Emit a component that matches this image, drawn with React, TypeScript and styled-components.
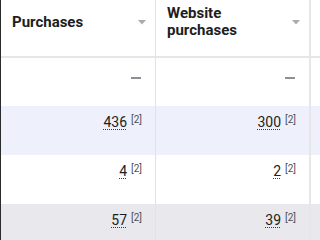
import styled, { createGlobalStyle } from "styled-components";

const GlobalStyle = createGlobalStyle`
  html, body {
    margin: 0;
    padding: 0;
    background: #ffffff;
  }
  body {
    font-family: Roboto, "Liberation Sans", Arial, sans-serif;
    color: #1c1e21;
    -webkit-font-smoothing: antialiased;
  }
`;

const Table = styled.div`
  width: 320px;
  height: 240px;
  overflow: hidden;
  border-left: 1px solid #2b2b2b;
  box-sizing: border-box;
`;

const Row = styled.div<{ $tone?: "white" | "blue" | "grey"; $height: number }>`
  display: grid;
  grid-template-columns: 155px 155px 1fr;
  height: ${(p) => p.$height}px;
  background: ${(p) =>
    p.$tone === "blue" ? "#eef0fb" : p.$tone === "grey" ? "#e9e8ec" : "#ffffff"};
`;

const HeaderRow = styled(Row)`
  border-bottom: 2px solid #e6e6e8;
`;

const Cell = styled.div<{ $wide?: boolean }>`
  box-sizing: border-box;
  border-right: ${(p) => (p.$wide ? "2px solid #e7e7ea" : "1px solid #e2e2e5")};
  display: flex;
  justify-content: flex-end;
  align-items: flex-start;
  padding: 7px 13px 0 0;
`;

const Filler = styled.div``;

const HeaderCell = styled(Cell)`
  justify-content: space-between;
  align-items: center;
  padding: 0 9px 12px 11px;
`;

const Title = styled.div`
  font-size: 15px;
  font-weight: 700;
  line-height: 17px;
  color: #1c1e21;
`;

const Caret = styled.svg`
  flex: none;
  width: 8px;
  height: 5px;
  margin-top: 1px;
`;

const Value = styled.span`
  font-size: 14px;
  line-height: 18px;
  color: #1c1e21;
  text-decoration: underline dotted #3a3d42;
  text-decoration-thickness: 1px;
  text-underline-offset: 2px;
`;

const Note = styled.span`
  font-size: 10px;
  line-height: 10px;
  color: #4b4f56;
  margin: 2px 0 0 4px;
`;

const Empty = styled.span`
  display: block;
  width: 10px;
  height: 2px;
  margin: 12px 1px 0 0;
  background: #8d9096;
`;

const DownCaret = () => (
  <Caret viewBox="0 0 8 5">
    <path d="M0 0h8L4 4.5z" fill="#a8abaf" />
  </Caret>
);

interface IMetric {
  value: string;
  note: string;
}

const rows: { tone: "white" | "blue" | "grey"; height: number; cells: (IMetric | null)[] }[] = [
  { tone: "white", height: 48, cells: [null, null] },
  { tone: "blue", height: 49, cells: [{ value: "436", note: "[2]" }, { value: "300", note: "[2]" }] },
  { tone: "white", height: 49, cells: [{ value: "4", note: "[2]" }, { value: "2", note: "[2]" }] },
  { tone: "grey", height: 49, cells: [{ value: "57", note: "[2]" }, { value: "39", note: "[2]" }] },
];

const MetricCell = ({ metric, wide }: { metric: IMetric | null; wide?: boolean }) => (
  <Cell $wide={wide}>
    {metric ? (
      <>
        <Value>{metric.value}</Value>
        <Note>{metric.note}</Note>
      </>
    ) : (
      <Empty />
    )}
  </Cell>
);

const App = () => {
  return (
    <>
      <GlobalStyle />
      <Table>
        <HeaderRow $height={56}>
          <HeaderCell>
            <Title>Purchases</Title>
            <DownCaret />
          </HeaderCell>
          <HeaderCell $wide>
            <Title>
              Website
              <br />
              purchases
            </Title>
            <DownCaret />
          </HeaderCell>
          <Filler />
        </HeaderRow>
        {rows.map((row, i) => (
          <Row key={i} $tone={row.tone} $height={row.height}>
            <MetricCell metric={row.cells[0]} />
            <MetricCell metric={row.cells[1]} wide />
            <Filler />
          </Row>
        ))}
      </Table>
    </>
  );
};

export default App;
